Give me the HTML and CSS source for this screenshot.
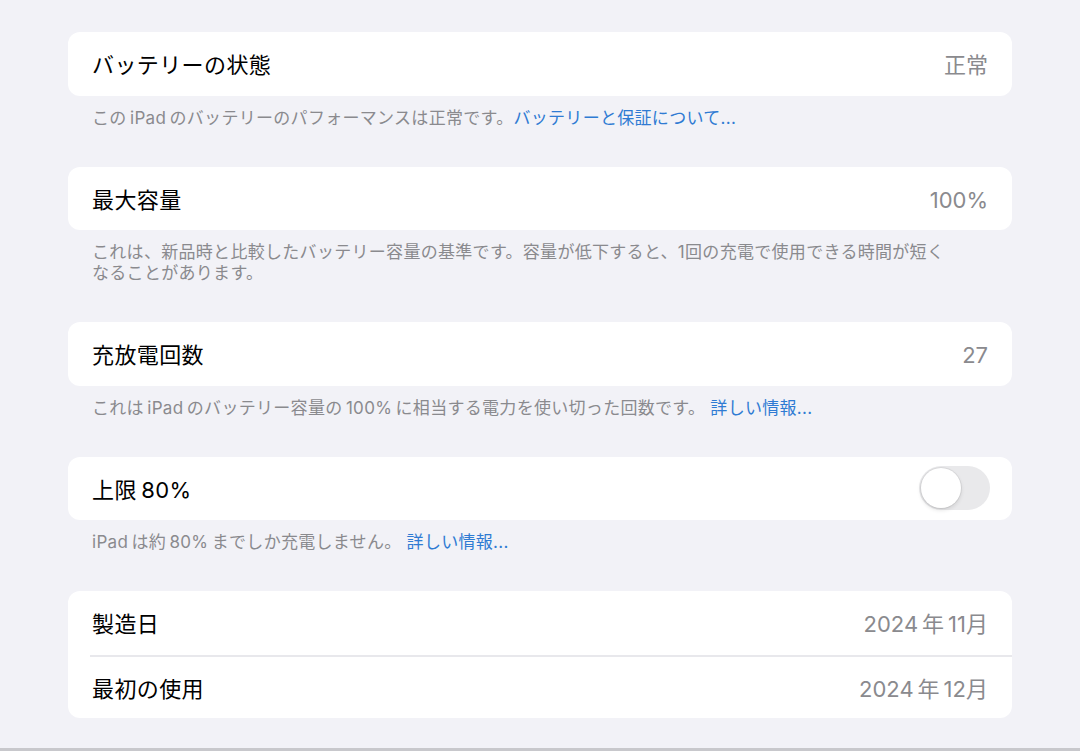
FILE: index.html
```html
<!DOCTYPE html>
<html lang="ja">
<head>
<meta charset="utf-8">
<link rel="stylesheet" href="styles.css">
</head>
<body>
<div class="page">
  <main class="content">
    <section class="group">
      <div class="card">
        <div class="row"><span class="title">バッテリーの状態</span><span class="value">正常</span></div>
      </div>
      <p class="footer">この&thinsp;iPad&thinsp;のバッテリーのパフォーマンスは正常です。<a class="link">バッテリーと保証について...</a></p>
    </section>
    <section class="group">
      <div class="card">
        <div class="row"><span class="title">最大容量</span><span class="value">100%</span></div>
      </div>
      <p class="footer">これは、新品時と比較したバッテリー容量の基準です。容量が低下すると、1回の充電で使用できる時間が短く<br>なることがあります。</p>
    </section>
    <section class="group">
      <div class="card">
        <div class="row"><span class="title">充放電回数</span><span class="value">27</span></div>
      </div>
      <p class="footer">これは&thinsp;iPad&thinsp;のバッテリー容量の&thinsp;100%&thinsp;に相当する電力を使い切った回数です。 <a class="link">詳しい情報...</a></p>
    </section>
    <section class="group">
      <div class="card">
        <div class="row toggle-row"><span class="title">上限&thinsp;80%</span><span class="switch"><span class="knob"></span></span></div>
      </div>
      <p class="footer">iPad&thinsp;は約&thinsp;80%&thinsp;までしか充電しません。 <a class="link">詳しい情報...</a></p>
    </section>
    <section class="group">
      <div class="card list">
        <div class="row"><span class="title">製造日</span><span class="value">2024&thinsp;年&thinsp;11月</span></div>
        <div class="row"><span class="title">最初の使用</span><span class="value">2024&thinsp;年&thinsp;12月</span></div>
      </div>
    </section>
  </main>
  <div class="bottom-line"></div>
</div>
</body>
</html>
```

FILE: styles.css
```css
html, body {
  margin: 0;
  padding: 0;
  background: #f2f2f7;
}
body {
  font-family: "Inter", "Noto Sans CJK JP", "Noto Sans", sans-serif;
  -webkit-font-smoothing: antialiased;
}
.page {
  min-height: 751px;
  display: flex;
  flex-direction: column;
}
.content {
  padding: 32px 68px 0 68px;
}
.card {
  background: #ffffff;
  border-radius: 12px;
  overflow: hidden;
}
.row {
  height: 63.5px;
  display: flex;
  align-items: center;
  justify-content: space-between;
  padding: 0 24px;
}
.title {
  font-size: 22px;
  line-height: 26px;
  margin-top: 3px;
  color: #000000;
  letter-spacing: 0.4px;
}
.value {
  font-size: 22px;
  line-height: 26px;
  margin-top: 3px;
  color: #8a8a8e;
}
.footer {
  margin: 0;
  padding: 12px 24px 38px 24px;
  font-size: 17px;
  line-height: 21px;
  letter-spacing: 0.3px;
  color: #8a8a8e;
}
.link {
  color: #2f7bd3;
}
.toggle-row {
  padding-right: 22px;
}
.switch {
  width: 71px;
  height: 44px;
  border-radius: 22px;
  background: #e9e9eb;
  display: flex;
  align-items: center;
  padding: 0 2px;
  box-sizing: border-box;
}
.knob {
  width: 40px;
  height: 40px;
  border-radius: 50%;
  background: #ffffff;
  box-shadow: 0 0 0 1px rgba(0, 0, 0, 0.06), 0 2px 4px rgba(0, 0, 0, 0.12);
}
.list .row {
  margin-left: 22px;
  padding-left: 2px;
}
.list .row + .row {
  border-top: 2px solid #e8e8ec;
  height: 61.5px;
}
.bottom-line {
  margin-top: auto;
  height: 3px;
  background: #c8c8cc;
}
```
